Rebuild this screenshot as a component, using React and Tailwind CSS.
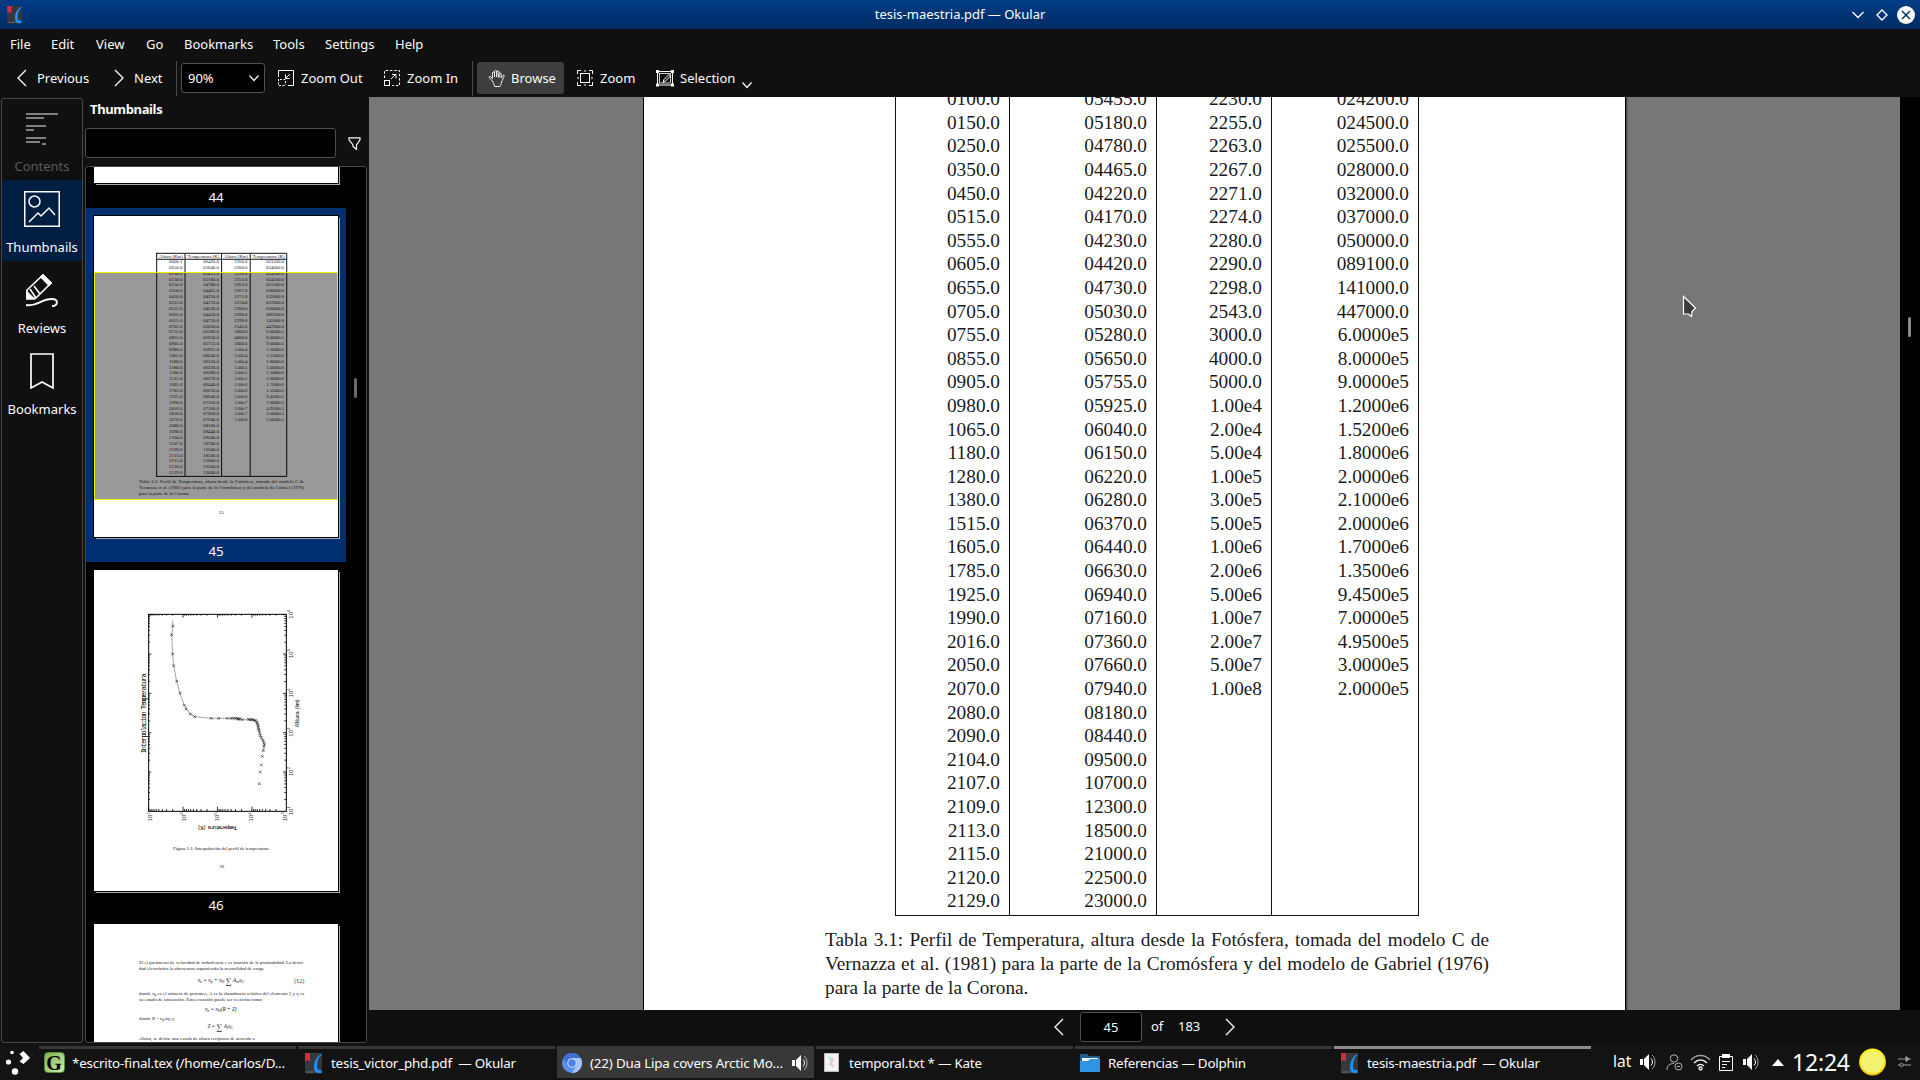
import React from "react";

const rows = [
  ["0000.1", "06420.0", "2160.0", "023500.0"],
  ["0050.0", "05840.0", "2200.0", "024000.0"],
  ["0100.0", "05455.0", "2230.0", "024200.0"],
  ["0150.0", "05180.0", "2255.0", "024500.0"],
  ["0250.0", "04780.0", "2263.0", "025500.0"],
  ["0350.0", "04465.0", "2267.0", "028000.0"],
  ["0450.0", "04220.0", "2271.0", "032000.0"],
  ["0515.0", "04170.0", "2274.0", "037000.0"],
  ["0555.0", "04230.0", "2280.0", "050000.0"],
  ["0605.0", "04420.0", "2290.0", "089100.0"],
  ["0655.0", "04730.0", "2298.0", "141000.0"],
  ["0705.0", "05030.0", "2543.0", "447000.0"],
  ["0755.0", "05280.0", "3000.0", "6.0000e5"],
  ["0855.0", "05650.0", "4000.0", "8.0000e5"],
  ["0905.0", "05755.0", "5000.0", "9.0000e5"],
  ["0980.0", "05925.0", "1.00e4", "1.2000e6"],
  ["1065.0", "06040.0", "2.00e4", "1.5200e6"],
  ["1180.0", "06150.0", "5.00e4", "1.8000e6"],
  ["1280.0", "06220.0", "1.00e5", "2.0000e6"],
  ["1380.0", "06280.0", "3.00e5", "2.1000e6"],
  ["1515.0", "06370.0", "5.00e5", "2.0000e6"],
  ["1605.0", "06440.0", "1.00e6", "1.7000e6"],
  ["1785.0", "06630.0", "2.00e6", "1.3500e6"],
  ["1925.0", "06940.0", "5.00e6", "9.4500e5"],
  ["1990.0", "07160.0", "1.00e7", "7.0000e5"],
  ["2016.0", "07360.0", "2.00e7", "4.9500e5"],
  ["2050.0", "07660.0", "5.00e7", "3.0000e5"],
  ["2070.0", "07940.0", "1.00e8", "2.0000e5"],
  ["2080.0", "08180.0", "", ""],
  ["2090.0", "08440.0", "", ""],
  ["2104.0", "09500.0", "", ""],
  ["2107.0", "10700.0", "", ""],
  ["2109.0", "12300.0", "", ""],
  ["2113.0", "18500.0", "", ""],
  ["2115.0", "21000.0", "", ""],
  ["2120.0", "22500.0", "", ""],
  ["2129.0", "23000.0", "", ""],
];

const headers = ["Altura (Km)", "Temperatura (K)", "Altura (Km)", "Temperatura (K)"];
const colWidths = ["w-[114px]", "w-[147px]", "w-[115px]", "w-[147px]"];

/* Page 45 of the thesis at its full zoom size; the thumbnail reuses it scaled down. */
function TablePage({ thick }) {
  const line = thick ? "border-[#111] border-r-4" : "border-[#111] border-r";
  return (
    <div className="flex h-[1291px] w-[981px] flex-col bg-white pt-[148px] font-['Liberation_Serif',serif] text-[19.3px] leading-[23.6px] text-[#1a1a1a]">
      <div className={thick ? "ml-[250px] flex w-[526px] border-y-4 border-l-4 border-[#111]" : "ml-[251px] flex w-[524px] border-y border-l border-[#111]"}>
        {headers.map((h, c) => (
          <div key={c} className={`${colWidths[c]} ${line} shrink-0 text-right`}>
            <div className={thick ? "-mr-px -mb-[5px] h-[24px] border-b-4 border-[#111] px-1 text-center whitespace-nowrap" : "h-[28px] border-b border-[#111] text-center whitespace-nowrap"}>{h}</div>
            {rows.map((r, i) => (
              <div key={i} className="h-[23.6px] pr-[9px] whitespace-nowrap">{r[c]}</div>
            ))}
            <div className={thick ? "h-[1px]" : "h-[2px]"} />
          </div>
        ))}
      </div>
      <div className={`${thick ? "mt-[8px]" : "mt-[12.5px]"} ml-[181px] w-[664px] whitespace-nowrap`}>
        <p className="[text-align-last:justify]">Tabla 3.1: Perfil de Temperatura, altura desde la Fotósfera, tomada del modelo C de</p>
        <p className="[text-align-last:justify]">Vernazza et al. (1981) para la parte de la Cromósfera y del modelo de Gabriel (1976)</p>
        <p>para la parte de la Corona.</p>
      </div>
      {thick && <div className="mt-[52px] ml-[42px] w-[939px] text-center">35</div>}
    </div>
  );
}

const Sum = () => <span className="inline-block align-middle text-[34px] leading-[24px]">∑</span>;

function TextPage() {
  return (
    <div className="flex h-[1291px] w-[981px] flex-col bg-white pt-[141px] pl-[181px] font-['Liberation_Serif',serif] text-[19.4px] leading-[24px] text-[#1a1a1a]">
      <div className="w-[664px] whitespace-nowrap">
        <p className="[text-align-last:justify]">El el parámetro de velocidad de turbulencia <i>v</i> es función de la profundidad. La densi-</p>
        <p>dad electrónica la obtenemos suponiendo la neutralidad de carga</p>
        <div className="flex h-[79px] items-center pl-[236px] text-[21px] italic">
          <span>n<sub>e</sub> = n<sub>p</sub> + n<sub>H</sub> <Sum /> A<sub>m</sub>x<sub>C</sub></span>
          <span className="ml-auto not-italic">(3.2)</span>
        </div>
        <p className="[text-align-last:justify]">donde <i>n</i><sub className="leading-none">p</sub> es el número de protones, <i>A</i> es la abundancia relativa del elemento ξ y η es</p>
        <p>su estado de ionización. Esta ecuación puede ser reescrita como</p>
        <div className="flex h-[54px] items-center pl-[265px] text-[21px] italic"><span>n<sub>e</sub> = n<sub>H</sub>(R + Z)</span></div>
        <p>donde <i>R</i> = <i>n</i><sub className="leading-none">p</sub>/<i>n</i><sub className="leading-none">H</sub> y</p>
        <div className="flex h-[40px] items-center pl-[275px] text-[21px] italic"><span>Z = <Sum /> A<sub>i</sub>x<sub>C</sub></span></div>
        <p className="mt-[15px]">Ahora, se define una escala de altura recíproca de acuerdo a</p>
      </div>
    </div>
  );
}

const pts = [[278, 198], [275, 224], [278, 282], [281, 317], [290, 364], [300, 400], [313, 436], [318, 447], [331, 462], [344, 470], [394, 475], [416, 475], [442, 475], [453, 475], [460, 475], [466, 475], [471, 475], [474, 477], [477, 478], [480, 476], [487, 479], [505, 478], [510, 479], [514, 479], [518, 479], [522, 481], [526, 481], [529, 484], [531, 488], [533, 492], [534, 497], [535, 502], [536, 507], [537, 512], [539, 520], [541, 527], [544, 533], [548, 540], [551, 546], [553, 553], [552, 559], [550, 572], [547, 589], [544, 615], [541, 636], [538, 671]];

/* Page 46: rotated log-log plot. */
function ChartPage() {
  const logs = [0.301, 0.477, 0.602, 0.699, 0.778, 0.845, 0.903, 0.954, 1];
  const xt = [];
  for (let d = 0; d < 4; d++) logs.forEach((l) => xt.push([619 - (d + l) * 103.3, l === 1]));
  const yt = [];
  for (let d = 0; d < 5; d++) logs.forEach((l) => yt.push([754 - (d + l) * 118, l === 1]));
  const tick = "font-['Liberation_Sans',sans-serif] text-[18px]";
  return (
    <svg width="244" height="321" viewBox="42 30 732 963" className="block bg-white">
      <g stroke="#000" strokeWidth="3" fill="none">
        <rect x="206" y="163" width="413" height="591" />
        {xt.map(([x, big], i) => <path key={i} d={`M${x} 163v${big ? 10 : 4}M${x} 754v-${big ? 14 : 7}`} strokeWidth="2.4" />)}
        {yt.map(([y, big], i) => <path key={i} d={`M206 ${y}h${big ? 8 : 4}M619 ${y}h-${big ? 10 : 6}`} strokeWidth="2.4" />)}
      </g>
      <path d="M278 182L279 198L275 224L278 282L281 317L290 364L300 400L313 436L331 462L344 470L394 475L471 475L487 479L518 479L529 484L535 502L539 520L548 540L553 553L550 572" fill="none" stroke="#777" strokeWidth="2" />
      {pts.map(([x, y], i) => <path key={i} d={`M${x - 4} ${y - 4}l8 8m-8 0l8 -8`} stroke="#222" strokeWidth="1.9" />)}
      <g fill="#000">
        <text transform="translate(197 580) rotate(-90)" textLength="240" className="font-['Liberation_Mono',monospace] text-[21px]">Interpolacion Temperatura</text>
        <text transform="translate(657 502) rotate(-90)" textLength="86" className="font-['Liberation_Mono',monospace] text-[18px]">Altura (km)</text>
        <text transform="translate(472 797) rotate(180)" textLength="120" className="font-['Liberation_Mono',monospace] text-[18px]">Temperatura (K)</text>
      </g>
      <g fill="#333">
        {[7, 6, 5, 4, 3].map((n, i) => <text key={n} transform={`translate(${216 + i * 101} 784) rotate(-90)`} className={tick}>10<tspan dy="-7" fontSize="13">{n}</tspan></text>)}
        {[6, 5, 4, 3, 2, 1].map((n, i) => <text key={n} transform={`translate(638 ${176 + i * 118}) rotate(-90)`} className={tick}>10<tspan dy="-7" fontSize="13">{n}</tspan></text>)}
      </g>
      <g fill="#222" className="font-['Liberation_Serif',serif]">
        <text x="279" y="870" textLength="290" className="text-[14.6px]">Figura 3.1: Interpolación del perfil de temperatura.</text>
        <text x="425" y="923" textAnchor="middle" className="text-[14.6px]">36</text>
      </g>
    </svg>
  );
}

function Scaled({ children }) {
  return <div className="h-[1291px] w-[981px] origin-top-left scale-[0.2487]">{children}</div>;
}

function Thumb({ label, selected, children }) {
  return (
    <div className={`flex h-[354px] w-[260px] shrink-0 flex-col pt-[8px] pl-[8px] ${selected ? "bg-[#00306f]" : ""}`}>
      <div className={`relative h-[321px] w-[244px] bg-white shadow-[1px_1px_0_0_#000,2px_2px_0_0_#aab] ${selected ? "outline outline-black" : ""}`}>
        <div className="h-[321px] w-[244px] overflow-hidden">{children}</div>
        {selected && <div className="absolute top-[56px] left-0 h-[228px] w-[244px] border border-[#f2f200] bg-black/40" />}
      </div>
      <div className="mt-[4px] h-[20px] w-[244px] text-center text-[13.33px] leading-[20px]">{label}</div>
    </div>
  );
}

const Svg = ({ w = 16, h = 16, className = "", children, sw = 1, ...p }) => (
  <svg width={w} height={h} viewBox={`0 0 ${w} ${h}`} fill="none" stroke="currentColor" strokeWidth={sw} className={`block shrink-0 ${className}`} {...p}>{children}</svg>
);

function OkularIcon({ w = 18, h = 21, className = "" }) {
  return (
    <svg width={w} height={h} viewBox="0 0 18 21" className={`block shrink-0 ${className}`}>
      <rect width="17" height="20.500" rx="1" fill="#34393e" />
      <path d="M1 18.500h8v1H1z" fill="#6a6f74" />
      <path d="M0 0h5v8.500l-2.500-1.500L0 8.500z" fill="#dc2740" />
      <path d="M16.500 1C11 3.500 9 9 9 14.500c0 4 2 5.500 5 5.500h2.500v-3h-2c-1.500 0-2.500-1-2.500-3.500C12 8 13.500 4 16.500 2z" fill="#1d8ff5" />
    </svg>
  );
}

function Speaker({ className = "" }) {
  return (
    <Svg w={18} h={16} className={className}>
      <path d="M0 5h3v6H0zM4 5l5-5v16l-5-5z" fill="currentColor" stroke="none" />
      <path d="M11 4.500c2 2 2 5 0 7" />
      <path d="M12 1c4 3 4 11 0 14" opacity=".6" />
    </Svg>
  );
}

function SideItem({ label, active, dim, children }) {
  return (
    <div className={`flex h-[81px] w-full shrink-0 flex-col items-center ${active ? "bg-[#001e42]" : ""} ${dim ? "text-[#5c5c5c]" : ""}`}>
      <div className="flex h-[57px] items-center pt-[1px]">{children}</div>
      <div className="h-[20px] leading-[20px]">{label}</div>
    </div>
  );
}

function Task({ icon, label, hot, active, trail, tw }) {
  return (
    <div className={`mr-[2px] flex h-[32px] w-[257px] shrink-0 items-center border-t-[3px] ${hot ? "border-[#383838] bg-[#383838]" : active ? "border-[#8e8e8e]" : "border-[#383838]"}`}>
      <div className="ml-[4px] flex w-[22px] shrink-0 justify-center">{icon}</div>
      <svg width={tw} height="20" className="ml-[7px] block shrink-0 overflow-visible"><text x="0" y="14" fill="#fcfcfc" textLength={tw} xmlSpace="preserve" className="text-[13.4px]">{label}</text></svg>
      {trail}
    </div>
  );
}

export default function App() {
  return (
    <div className="relative flex h-[1080px] w-[1920px] flex-col overflow-hidden bg-[#101010] font-['Noto_Sans',sans-serif] text-[13px] text-[#fcfcfc]">
      <header className="flex h-[29px] shrink-0 items-center bg-linear-to-b from-[#003c86] to-[#002c64]">
        <OkularIcon w={16} h={18} className="ml-[7px]" />
        <div className="ml-[-23px] flex-1 pl-[68px] text-center leading-[29px]">tesis-maestria.pdf — Okular</div>
        <Svg w={12} h={8} sw={1.4} className="mr-[12px]"><path d="M.5 1L6 6.500L11.500 1" /></Svg>
        <Svg w={12} h={12} sw={1.4} className="mr-[9px]"><path d="M6 1L11 6L6 11L1 6z" /></Svg>
        <svg width="18" height="18" className="mr-[5px] block"><circle cx="9" cy="9" r="9" fill="#fff" /><path d="M5 5l8 8m0-8l-8 8" stroke="#003070" strokeWidth="1.5" /></svg>
      </header>

      <nav className="flex h-[32px] shrink-0 leading-[31px]">
        <span className="ml-[10px] w-[41px]">File</span>
        <span className="w-[45px]">Edit</span>
        <span className="w-[50px]">View</span>
        <span className="w-[38px]">Go</span>
        <span className="w-[89px]">Bookmarks</span>
        <span className="w-[52px]">Tools</span>
        <span className="w-[70px]">Settings</span>
        <span>Help</span>
      </nav>

      <div className="flex h-[36px] shrink-0 items-start leading-[34px]">
        <Svg w={10} h={18} sw={1.3} className="mt-[8px] ml-[17px]"><path d="M9 1L1 9L9 17" /></Svg>
        <span className="ml-[10px] w-[77px]">Previous</span>
        <Svg w={10} h={18} sw={1.3} className="mt-[8px]"><path d="M1 1L9 9L1 17" /></Svg>
        <span className="ml-[10px] w-[42px]">Next</span>
        <div className="h-[35px] w-px bg-[#4a4a4a]" />
        <div className="mt-[2px] ml-[4px] flex h-[30px] w-[84px] items-center rounded-[3px] border border-[#505050] bg-black pl-[6px]">
          <span>90%</span>
          <Svg w={10} h={7} sw={1.2} className="mr-[5px] ml-auto"><path d="M.5 .5L5 5.500L9.500 .5" /></Svg>
        </div>
        <Svg w={16} h={16} className="mt-[9px] ml-[13px]">
          <path d="M.5 7V.5h15v15H10" /><path d="M.5 9v6.500H8" strokeDasharray="2 1.500" /><path d="M2 9.500h5.500V15" strokeDasharray="2 1.500" /><path d="M12 4L8 8M7.500 4.500v4h4" />
        </Svg>
        <span className="ml-[7px] w-[83px]">Zoom Out</span>
        <Svg w={16} h={16} className="mt-[9px]">
          <path d="M.5 8V.5h15v15H8" strokeDasharray="2.500 1.800" /><rect x=".5" y="10.500" width="5" height="5" /><path d="M7 9l5-5M8 4.500h4v4" />
        </Svg>
        <span className="ml-[7px] w-[65px]">Zoom In</span>
        <div className="h-[35px] w-px bg-[#4a4a4a]" />
        <div className="mt-px ml-[4px] flex h-[32px] w-[87px] items-center rounded-[3px] bg-[#3e3e3e] pl-[11px]">
          <Svg w={17} h={17}>
            <path d="M4.500 11L1.500 8C.5 7 1.500 6 2.500 6.500L4.500 8.500V3c0-1.500 2-1.500 2 0v4V1.500c0-1.500 2.200-1.500 2.200 0V7V2c0-1.500 2.200-1.500 2.200 0v5.500V4c0-1.500 2.200-1.500 2.200 0v4l1.500-2.500c1-1 2 0 1.500 1L13.500 12c0 2-1 3-1.500 4.500H6.500C6.500 14 5 13 4.500 11z" strokeWidth=".9" />
          </Svg>
          <span className="ml-[6px]">Browse</span>
        </div>
        <Svg w={16} h={16} className="mt-[9px] ml-[13px]">
          <path d="M.5 4V.5H4M12 .5h3.500V4M15.500 12v3.500H12M4 15.500H.5V12" /><rect x="3.500" y="3.500" width="9" height="9" /><path d="M6.500 1.500L8 0l1.500 1.500zM6.500 14.500L8 16l1.500-1.500zM1.500 6.500L0 8l1.500 1.500zM14.500 6.500L16 8l-1.500 1.500z" fill="currentColor" stroke="none" />
        </Svg>
        <span className="ml-[7px] w-[56px]">Zoom</span>
        <Svg w={18} h={17} className="mt-[9px]">
          <rect x="1.500" y="1.500" width="15" height="13.500" /><rect x="3.500" y="3.500" width="11" height="9.500" strokeWidth=".8" /><path d="M0 0h3v3H0zM15 0h3v3h-3zM0 13.500h3v3H0zM15 13.500h3v3h-3z" fill="currentColor" stroke="none" /><path d="M7 12.500l1-3 5-5 1.500 1.500-5 5z" />
        </Svg>
        <span className="ml-[6px] w-[56px]">Selection</span>
        <Svg w={10} h={7} sw={1.2} className="mt-[21px] ml-[6px]"><path d="M.5 .5L5 5.500L9.500 .5" /></Svg>
      </div>

      <main className="flex h-[947px] shrink-0">
        <aside className="mt-px ml-px flex h-[945px] w-[82px] shrink-0 flex-col rounded-[3px] border border-[#484848]">
          <SideItem label="Contents" dim>
            <svg width="32" height="32" className="mt-[2px] block" fill="#808080"><path d="M0 0h32v2H0zM0 4h18v2H0zM0 12h20v2H0zM0 16h8v2H0zM0 24h20v2H0zM0 28h14v2H0zM16 30h4v2h-4z" /></svg>
          </SideItem>
          <SideItem label="Thumbnails" active>
            <Svg w={36} h={36} sw={1.5}><rect x=".75" y=".75" width="34.500" height="34.500" /><circle cx="10.500" cy="10.500" r="5.500" /><path d="M5 31l9-9 3 3 8-8 6 7" /></Svg>
          </SideItem>
          <SideItem label="Reviews">
            <Svg w={32} h={33} sw={1.6} className="mt-[1px]">
              <path d="M1 16L17 1l8 8-15 15H1z" /><path d="M17 1l8 8-2 2-8-8zM1 18l7 7H1z" fill="currentColor" /><path d="M4 15l6 9M8 12l6 8" /><path d="M0 31c12 2 14-6 26-6 7 0 6 7 0 7" strokeWidth="2" />
            </Svg>
          </SideItem>
          <SideItem label="Bookmarks">
            <Svg w={24} h={36} sw={1.7}><path d="M1 1h22v34l-11-6-11 6z" /></Svg>
          </SideItem>
        </aside>

        <section className="ml-[2px] flex w-[284px] shrink-0 flex-col">
          <h2 className="ml-[5px] h-[31px] text-[13px] leading-[24px] font-bold tracking-[-0.35px]">Thumbnails</h2>
          <div className="flex h-[30px] items-center">
            <div className="h-[30px] w-[251px] rounded-[3px] border border-[#505050] bg-black" />
            <Svg w={13} h={13} sw={1.2} className="ml-[12px]"><path d="M1 .8h11v2L8.500 8v4.500L5 9.500V8L1 2.800z" /></Svg>
          </div>
          <div className="mt-[8px] flex h-[877px] w-[282px] overflow-hidden rounded-[3px] border border-[#484848] bg-black">
            <div className="mt-[-313px] flex h-[1300px] w-[260px] shrink-0 flex-col">
              <Thumb label="44" />
              <Thumb label="45" selected><Scaled><TablePage thick /></Scaled></Thumb>
              <Thumb label="46"><ChartPage /></Thumb>
              <Thumb label="47"><Scaled><TextPage /></Scaled></Thumb>
            </div>
            <div className="mt-[211px] ml-[8px] h-[20px] w-[3px] rounded-full bg-[#6a6a6a]" />
          </div>
        </section>

        <section className="flex w-[1551px] shrink-0 flex-col">
          <div className="flex h-[913px] bg-[#777]">
            <div className="ml-[274px] h-full w-[983px] shrink-0 overflow-hidden border-x border-black shadow-[1px_0_0_0_#444,2px_0_0_0_#666]">
              <div className="mt-[-234px]"><TablePage /></div>
            </div>
            <div className="ml-auto flex w-[20px] justify-center bg-black pr-px">
              <div className="mt-[220px] h-[20px] w-[3px] rounded-full bg-[#8a8a8a]" />
            </div>
          </div>
          <div className="flex h-[34px] items-center">
            <Svg w={10} h={18} sw={1.3} className="ml-[685px]"><path d="M9 1L1 9L9 17" /></Svg>
            <div className="ml-[16px] h-[30px] w-[62px] rounded-[3px] border border-[#505050] bg-black text-center leading-[29px]">45</div>
            <span className="ml-[9px] w-[27px]">of</span>
            <span className="w-[47px]">183</span>
            <Svg w={10} h={18} sw={1.3}><path d="M1 1L9 9L1 17" /></Svg>
          </div>
        </section>
      </main>

      <footer className="flex h-[36px] shrink-0 items-start bg-[#131313] pt-[2px]">
        <svg width="25" height="26" className="mt-[4px] mr-[9px] ml-[5px] block shrink-0" fill="#fff"><circle cx="7" cy="2.500" r="1.800" /><circle cx="3.500" cy="12" r="2.600" /><circle cx="10" cy="21.500" r="3.200" /><path d="M14.500 4l4-3 6.500 7-6.500 6-4-2.500 3.500-3.500z" /></svg>
        <Task tw={213} label="*escrito-final.tex (/home/carlos/D..." icon={
          <span className="mb-[2px] flex h-[21px] w-[21px] items-center justify-center rounded-[4px] border border-[#5c8c3c] bg-linear-to-br from-[#7ab648] to-[#cdeab0] font-['Liberation_Serif',serif] text-[20px] leading-none font-bold text-black">G</span>
        } />
        <Task tw={185} label="tesis_victor_phd.pdf  — Okular" icon={<OkularIcon className="mb-px ml-[2px]" />} />
        <Task tw={193} hot label="(22) Dua Lipa covers Arctic Mo..." trail={<Speaker className="mb-px ml-[9px]" />} icon={
          <svg width="20" height="20" viewBox="0 0 20 20" className="mb-px block"><circle cx="10" cy="10" r="10" fill="#5a8ef0" /><path d="M10 5h8.700A10 10 0 0 0 1.300 5L6 12z" fill="#3f6fd6" /><path d="M10 20A10 10 0 0 0 18.700 5H10l4.500 7.500z" fill="#a6c4fb" /><circle cx="10" cy="10" r="4.800" fill="#c9dcff" /><circle cx="10" cy="10" r="3.700" fill="#4a80ee" /></svg>
        } />
        <Task tw={133} label="temporal.txt * — Kate" icon={
          <svg width="15" height="19" className="mb-[2px] block"><rect x=".5" y=".5" width="14" height="18" fill="#f3f3f1" stroke="#bbb" /><path d="M5 4l3 4-2 4" stroke="#a5e0d4" strokeWidth="2" fill="none" /><path d="M9 5l-2 5 2 4" stroke="#f3c0d0" strokeWidth="2" fill="none" /></svg>
        } />
        <Task tw={138} label="Referencias — Dolphin" icon={
          <svg width="20" height="18" className="mb-[2px] block"><path d="M0 0h7l2 2h11v5H0z" fill="#1c5f94" /><rect x="2" y="4" width="16" height="4" fill="#fff" /><path d="M0 7h8l2-2h10v13H0z" fill="#2f93e6" /></svg>
        } />
        <Task tw={173} active label="tesis-maestria.pdf  — Okular" icon={<OkularIcon className="mb-px ml-[2px]" />} />
        <div className="flex h-[32px] flex-1 items-center">
          <span className="ml-[20px] w-[27px] text-[15.5px]">lat</span>
          <Speaker />
          <Svg w={18} h={17} className="ml-[8px] opacity-70"><circle cx="8" cy="4.500" r="3.700" /><path d="M1 16c0-5 3-6.500 7-6.500" /><circle cx="12.500" cy="12.500" r="3.500" /><path d="M11 12.500h3" /></Svg>
          <Svg w={21} h={17} sw={1.3} className="ml-[6px]"><path d="M1 6c5-6 14-6 19 0" opacity=".6" /><path d="M4 9c4-4 9-4 13 0" /><path d="M7 12c2-2 5-2 7 0" /><circle cx="10.500" cy="14.500" r="1.500" /></Svg>
          <Svg w={14} h={17} className="ml-[8px]"><path d="M.5 2.500h13v14H.5z" /><path d="M3 0h8v4H3z" fill="currentColor" stroke="none" /><path d="M3 7.500h8M3 10.500h5M3 13.500h3" /></Svg>
          <Speaker className="ml-[10px]" />
          <svg width="12" height="7" className="ml-[11px] block shrink-0"><path d="M0 7L6 0l6 7z" fill="#fff" /></svg>
          <span className="ml-[8px] w-[67px] text-[23px] leading-[32px] tracking-[-0.2px]">12:24</span>
          <svg width="28" height="28" className="block shrink-0"><defs><linearGradient id="moon" x1="0" y1="0" x2="0" y2="1"><stop offset="0" stopColor="#ffff00" /><stop offset="1" stopColor="#f6c400" /></linearGradient></defs><circle cx="13.500" cy="14" r="12.500" fill="#f2f270" stroke="url(#moon)" strokeWidth="1.800" /></svg>
          <Svg w={13} h={12} className="ml-[11px] opacity-60"><path d="M0 3h13M0 9h13" /><path d="M8 .5v5l3-2.500z" fill="currentColor" /><circle cx="3.500" cy="9" r="1.700" fill="#131313" /></Svg>
        </div>
      </footer>

      <svg width="15" height="23" className="absolute top-[295px] left-[1682px]"><path d="M1.500 1.500v17.500h5l3 2.500.500-5 3.500-3.500z" fill="#3c3c3c" stroke="#fff" strokeWidth="1.200" /></svg>
    </div>
  );
}
